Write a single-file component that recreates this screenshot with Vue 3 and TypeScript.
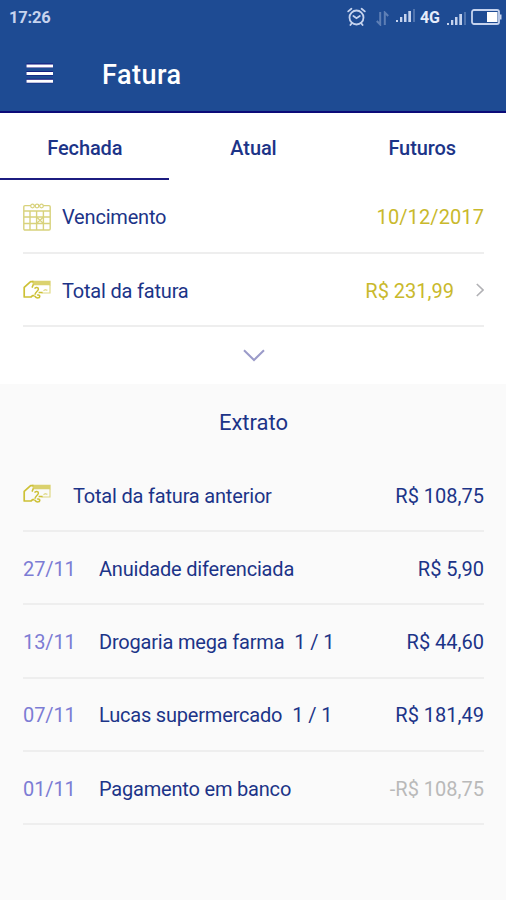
<script setup lang="ts">
interface Entry {
  id: number
  date?: string
  label: string
  installment?: string
  amount: string
  credit?: boolean
}

const tabs: string[] = ['Fechada', 'Atual', 'Futuros']
const activeTab = 'Fechada'

const entries: Entry[] = [
  { id: 1, label: 'Total da fatura anterior', amount: 'R$ 108,75' },
  { id: 2, date: '27/11', label: 'Anuidade diferenciada', amount: 'R$ 5,90' },
  { id: 3, date: '13/11', label: 'Drogaria mega farma', installment: '1 / 1', amount: 'R$ 44,60' },
  { id: 4, date: '07/11', label: 'Lucas supermercado', installment: '1 / 1', amount: 'R$ 181,49' },
  { id: 5, date: '01/11', label: 'Pagamento em banco', amount: '-R$ 108,75', credit: true },
]
</script>

<template>
  <div class="screen">
    <svg class="symbols" aria-hidden="true">
      <symbol id="card-hand" viewBox="0 0 28 20">
        <path d="M10.5 1.6H7.6L1.2 7.4V17H8L9.6 15.6H11.5" fill="none" stroke="currentColor" stroke-width="1.7" stroke-linejoin="round" />
        <path d="M9 .8H27.6V5.2H10Z" fill="currentColor" fill-opacity=".72" />
        <path d="M10.4 4.4L9 7.6M11.6 8.6C12.4 6.8 15.6 7.2 15.4 9.2C15.2 11.2 12 12.2 12 14.8M11.6 16C13.6 18.6 16.8 18.4 16.8 16C16.4 14.6 14.4 15 14 15.2M15.6 12.4H19.6" fill="none" stroke="currentColor" stroke-width="1.5" stroke-linejoin="round" />
        <path d="M27 5V13H18.5M20.5 10.8L22.2 9.6L24.4 10.4" fill="none" stroke="currentColor" stroke-opacity=".6" stroke-width="1.2" />
      </symbol>
    </svg>

    <header class="header">
      <div class="status">
        <span class="clock">17:26</span>
        <div class="indicators">
          <svg class="alarm" width="19" height="20" viewBox="0 0 19 20" fill="none" stroke="currentColor" stroke-width="1.8" stroke-linecap="round">
            <circle cx="9.5" cy="10.5" r="7" />
            <path d="M1.2 4.4L4.4 1.8M17.8 4.4L14.6 1.8M6.4 9L9.5 11.2L12.8 9M4.8 16.2L3.4 18M14.2 16.2L15.6 18" />
          </svg>
          <svg class="transfer" width="13" height="15" viewBox="0 0 13 15" fill="none" stroke="currentColor" stroke-width="2">
            <path d="M4.2 1V13.5L.8 10M8.8 14V1.5L12.2 5" />
          </svg>
          <svg class="signal" width="20" height="14" viewBox="0 0 20 14" fill="currentColor">
            <path d="M0 11H2V13H0ZM4 8H6.3V13H4ZM8 5H10.5V13H8ZM12.3 2H15V13H12.3Z" />
            <path d="M17 0H19V13H17Z" opacity=".3" />
          </svg>
          <span class="network">4G</span>
          <svg class="signal second" width="20" height="14" viewBox="0 0 20 14" fill="currentColor">
            <path d="M0 11H2V13H0ZM4 8H6.3V13H4ZM8 5H10.5V13H8ZM12.3 2H15V13H12.3Z" />
            <path d="M17 0H19V13H17Z" opacity=".3" />
          </svg>
          <svg class="battery" width="31" height="16" viewBox="0 0 31 16">
            <rect x="1" y="1" width="27" height="14" rx="2" fill="none" stroke="#c6d3ee" stroke-width="1.8" />
            <rect x="16" y="3" width="10.5" height="10" fill="#fff" />
            <path d="M29 5.5H30.5V10.5H29Z" fill="#c6d3ee" />
          </svg>
        </div>
      </div>
      <div class="toolbar">
        <svg class="menu" width="28" height="22" viewBox="0 0 28 22">
          <path d="M.5 2.8H27M.5 10.4H27M.5 18H27" stroke="#10107c" stroke-width="4.4" />
          <path d="M.5 3H27M.5 10.6H27M.5 18.2H27" stroke="#fff" stroke-width="3" />
        </svg>
        <h1 class="title">Fatura</h1>
      </div>
    </header>

    <nav class="tabs">
      <a v-for="tab in tabs" :key="tab" class="tab" :class="{ active: tab === activeTab }">{{ tab }}</a>
    </nav>

    <section class="summary">
      <div class="row">
        <svg class="calendar" width="28" height="28" viewBox="0 0 28 28" fill="none" stroke="currentColor">
          <rect x=".8" y="2.6" width="26.4" height="24.4" rx="1.2" stroke-width="1.4" />
          <path d="M1 8H27M1 14H27M1 20.5H27M7 8V27M13.6 8V27M20.4 8V27" stroke-width="1.4" />
          <path d="M13.8 14.2L20.2 20.2M20.2 14.2L13.8 20.2" stroke-width="1.2" />
          <g fill="#fff" stroke-width="1.2">
            <circle cx="9.5" cy="3" r="1.8" /><circle cx="14" cy="3" r="1.8" /><circle cx="18.5" cy="3" r="1.8" />
          </g>
        </svg>
        <span class="name">Vencimento</span>
        <span class="value date-value">10/12/2017</span>
      </div>
      <div class="row">
        <svg class="card"><use href="#card-hand" /></svg>
        <span class="name">Total da fatura</span>
        <span class="value">R$ 231,99</span>
        <svg class="next" width="8" height="14" viewBox="0 0 8 14" fill="none" stroke="#b1b1b5" stroke-width="1.6">
          <path d="M.8 1L7 7L.8 13" />
        </svg>
      </div>
      <div class="expand">
        <svg width="22" height="13" viewBox="0 0 22 13" fill="none" stroke="#9b9bc9" stroke-width="2">
          <path d="M1 1.2L11 11L21 1.2" />
        </svg>
      </div>
    </section>

    <section class="statement">
      <h2 class="heading">Extrato</h2>
      <div v-for="entry in entries" :key="entry.id" class="row">
        <span v-if="entry.date" class="date">{{ entry.date }}</span>
        <svg v-else class="card wide"><use href="#card-hand" /></svg>
        <span class="name">{{ entry.label }}</span>
        <span v-if="entry.installment" class="installment">{{ entry.installment }}</span>
        <span class="amount" :class="{ credit: entry.credit }">{{ entry.amount }}</span>
      </div>
    </section>
  </div>
</template>

<style>
body {
  margin: 0;
  background: #fafafa;
}
</style>

<style scoped>
.screen {
  display: flex;
  flex-direction: column;
  width: 100%;
  height: 900px;
  overflow: hidden;
  background: #fafafa;
  color: #1c3488;
  font-family: Roboto, sans-serif;
  font-size: 20px;
  line-height: 24px;
}

.symbols {
  display: none;
}

.header {
  box-sizing: border-box;
  flex: none;
  height: 113px;
  border-bottom: 2px solid #0b0b78;
  background: #1e4b93;
  color: #fff;
}

.status {
  display: flex;
  align-items: center;
  justify-content: space-between;
  height: 36px;
  padding: 0 4px 0 9px;
  color: #c6d3ee;
}

.clock {
  font-size: 16.5px;
  font-weight: 700;
  letter-spacing: -.2px;
}

.indicators {
  display: flex;
  align-items: center;
}

.alarm {
  margin: -3px 10px 0 0;
}

.transfer {
  margin-right: 7px;
  opacity: .38;
}

.signal {
  margin: -4px 4px 0 0;
}

.network {
  margin-right: 7px;
  color: #e6ecfa;
  font-size: 16px;
  font-weight: 700;
}

.second {
  margin: 1px 4px 0 0;
}

.battery {
  margin-top: -2px;
}

.toolbar {
  display: flex;
  align-items: center;
  height: 75px;
  padding-left: 26px;
}

.menu {
  margin: 0 48px 0 0;
}

.title {
  margin: 3px 0 0;
  font-size: 27px;
  font-weight: 500;
  letter-spacing: .5px;
  line-height: 32px;
}

.tabs {
  display: grid;
  flex: none;
  grid-template-columns: repeat(3, 1fr);
  height: 67px;
  background: #fff;
}

.tab {
  box-sizing: border-box;
  padding: 23px 0 0 1px;
  border-bottom: 2px solid transparent;
  font-weight: 500;
  letter-spacing: -.1px;
  text-align: center;
}

.active {
  border-color: #1c1c80;
}

.summary {
  box-sizing: border-box;
  flex: none;
  height: 204px;
  padding: 0 22px 0 23px;
  background: #fff;
}

.row {
  box-sizing: border-box;
  display: flex;
  align-items: center;
  height: 73.2px;
  padding-top: 2.6px;
  border-bottom: 2px solid #eee;
}

.summary .row {
  height: 73.5px;
}

.name {
  letter-spacing: -.19px;
}

.calendar {
  margin-right: 11px;
  color: #d8d27c;
}

.card {
  width: 28px;
  height: 20px;
  margin: -1px 11px 0 0;
  color: #cdc136;
}

.wide {
  margin: -3px 22px 0 0;
}

.value {
  margin-left: auto;
  color: #c9b92c;
}

.date-value {
  letter-spacing: .1px;
}

.next {
  margin: -1px 0 0 22px;
}

.expand {
  display: flex;
  justify-content: center;
  padding-top: 22px;
}

.statement {
  padding: 0 22px 0 23px;
}

.heading {
  margin: 0;
  padding: 25px 0 23px;
  font-size: 22px;
  font-weight: 400;
  line-height: 27px;
  text-align: center;
}

.date {
  width: 76px;
  color: #7c7cd4;
  letter-spacing: -.1px;
}

.installment {
  margin-left: 10px;
  letter-spacing: -.1px;
}

.amount {
  margin-left: auto;
}

.credit {
  color: #b9b9b9;
}
</style>
